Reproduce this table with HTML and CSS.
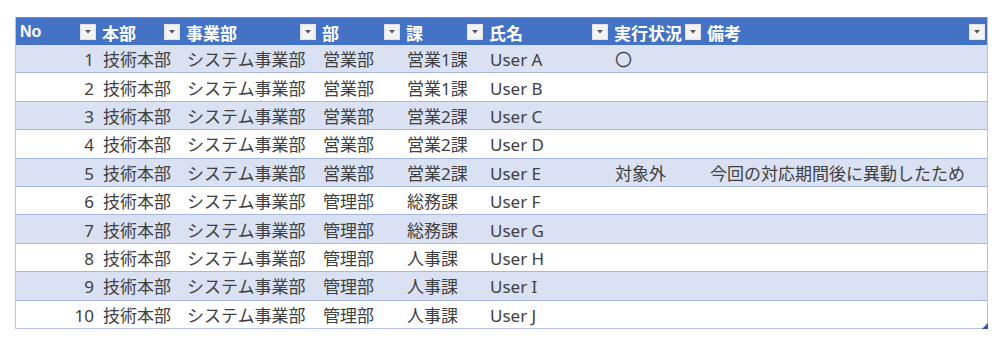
FILE: index.html
```html
<!DOCTYPE html>
<html lang="ja">
<head>
<meta charset="utf-8">
<title>Table</title>
<link rel="stylesheet" href="styles.css">
</head>
<body>
<div class="wrap">
  <div class="sheet">
    <div class="row head">
      <div class="hc"><span class="ht latin">No</span><span class="dd"><svg viewBox="0 0 6 4" width="6" height="4"><path d="M0 0H6L3 3.5Z" fill="#555"/></svg></span></div>
      <div class="hc"><span class="ht">本部</span><span class="dd"><svg viewBox="0 0 6 4" width="6" height="4"><path d="M0 0H6L3 3.5Z" fill="#555"/></svg></span></div>
      <div class="hc"><span class="ht">事業部</span><span class="dd"><svg viewBox="0 0 6 4" width="6" height="4"><path d="M0 0H6L3 3.5Z" fill="#555"/></svg></span></div>
      <div class="hc"><span class="ht">部</span><span class="dd"><svg viewBox="0 0 6 4" width="6" height="4"><path d="M0 0H6L3 3.5Z" fill="#555"/></svg></span></div>
      <div class="hc"><span class="ht">課</span><span class="dd"><svg viewBox="0 0 6 4" width="6" height="4"><path d="M0 0H6L3 3.5Z" fill="#555"/></svg></span></div>
      <div class="hc"><span class="ht">氏名</span><span class="dd"><svg viewBox="0 0 6 4" width="6" height="4"><path d="M0 0H6L3 3.5Z" fill="#555"/></svg></span></div>
      <div class="hc"><span class="ht">実行状況</span><span class="dd"><svg viewBox="0 0 6 4" width="6" height="4"><path d="M0 0H6L3 3.5Z" fill="#555"/></svg></span></div>
      <div class="hc"><span class="ht">備考</span><span class="dd"><svg viewBox="0 0 6 4" width="6" height="4"><path d="M0 0H6L3 3.5Z" fill="#555"/></svg></span></div>
    </div>
    <div class="row band"><div class="c num">1</div><div class="c">技術本部</div><div class="c">システム事業部</div><div class="c">営業部</div><div class="c">営業1課</div><div class="c">User A</div><div class="c">〇</div><div class="c note"></div></div>
    <div class="row"><div class="c num">2</div><div class="c">技術本部</div><div class="c">システム事業部</div><div class="c">営業部</div><div class="c">営業1課</div><div class="c">User B</div><div class="c"></div><div class="c note"></div></div>
    <div class="row band"><div class="c num">3</div><div class="c">技術本部</div><div class="c">システム事業部</div><div class="c">営業部</div><div class="c">営業2課</div><div class="c">User C</div><div class="c"></div><div class="c note"></div></div>
    <div class="row"><div class="c num">4</div><div class="c">技術本部</div><div class="c">システム事業部</div><div class="c">営業部</div><div class="c">営業2課</div><div class="c">User D</div><div class="c"></div><div class="c note"></div></div>
    <div class="row band"><div class="c num">5</div><div class="c">技術本部</div><div class="c">システム事業部</div><div class="c">営業部</div><div class="c">営業2課</div><div class="c">User E</div><div class="c">対象外</div><div class="c note">今回の対応期間後に異動したため</div></div>
    <div class="row"><div class="c num">6</div><div class="c">技術本部</div><div class="c">システム事業部</div><div class="c">管理部</div><div class="c">総務課</div><div class="c">User F</div><div class="c"></div><div class="c note"></div></div>
    <div class="row band"><div class="c num">7</div><div class="c">技術本部</div><div class="c">システム事業部</div><div class="c">管理部</div><div class="c">総務課</div><div class="c">User G</div><div class="c"></div><div class="c note"></div></div>
    <div class="row"><div class="c num">8</div><div class="c">技術本部</div><div class="c">システム事業部</div><div class="c">管理部</div><div class="c">人事課</div><div class="c">User H</div><div class="c"></div><div class="c note"></div></div>
    <div class="row band"><div class="c num">9</div><div class="c">技術本部</div><div class="c">システム事業部</div><div class="c">管理部</div><div class="c">人事課</div><div class="c">User I</div><div class="c"></div><div class="c note"></div></div>
    <div class="row last"><div class="c num">10</div><div class="c">技術本部</div><div class="c">システム事業部</div><div class="c">管理部</div><div class="c">人事課</div><div class="c">User J</div><div class="c"></div><div class="c note"></div></div>
  </div>
  <span class="handle"></span>
</div>
</body>
</html>
```

FILE: styles.css
```css
html, body {
  margin: 0;
  padding: 0;
  background: #ffffff;
}

body {
  font-family: "Noto Sans", "Noto Sans CJK JP", sans-serif;
  color: #404040;
}

.wrap {
  position: relative;
  width: 973px;
  margin: 17px 0 0 15px;
}

.sheet {
  display: flex;
  flex-direction: column;
  border-left: 1px solid #b4c3e6;
  border-right: 1px solid #b4c3e6;
  box-sizing: border-box;
  width: 973px;
}

.row {
  display: grid;
  grid-template-columns: 82px 84px 136px 84px 83px 125px 93px 284px;
  height: 28.4px;
  box-sizing: border-box;
  border-bottom: 1px solid #a6b8e0;
  background: #ffffff;
}

.row.band {
  background: #d9e1f2;
}

.row.last {
  border-bottom: 1px solid #b4c3e6;
}

.row.head {
  height: 28px;
  background: #4472c4;
  border-bottom: none;
  border-top: 1px solid #6a8fd2;
}

.hc {
  display: flex;
  align-items: center;
  padding: 1px 2px 0 4px;
  min-width: 0;
}

.ht {
  color: #ffffff;
  font-weight: 700;
  font-size: 17px;
  font-family: "Noto Sans CJK JP", "Noto Sans", sans-serif;
  line-height: 1;
  white-space: nowrap;
}

.ht.latin {
  font-family: "Liberation Sans", "Noto Sans", sans-serif;
  font-size: 16px;
}

.dd {
  margin-left: auto;
  width: 16px;
  height: 16px;
  background: #f3f3f3;
  border: 1px solid #e2e2e2;
  box-sizing: border-box;
  display: flex;
  align-items: center;
  justify-content: center;
  flex-shrink: 0;
}

.c {
  display: flex;
  align-items: center;
  padding: 2px 4px 0 5px;
  font-size: 17px;
  line-height: 1;
  white-space: nowrap;
  font-weight: 400;
}

.c.num {
  justify-content: flex-end;
  padding: 2px 4px 0 0;
}

.c.note {
  padding-left: 7px;
}

.handle {
  position: absolute;
  right: 0;
  bottom: 0;
  width: 0;
  height: 0;
  border-left: 6px solid transparent;
  border-bottom: 6px solid #2e4fa3;
}
```
